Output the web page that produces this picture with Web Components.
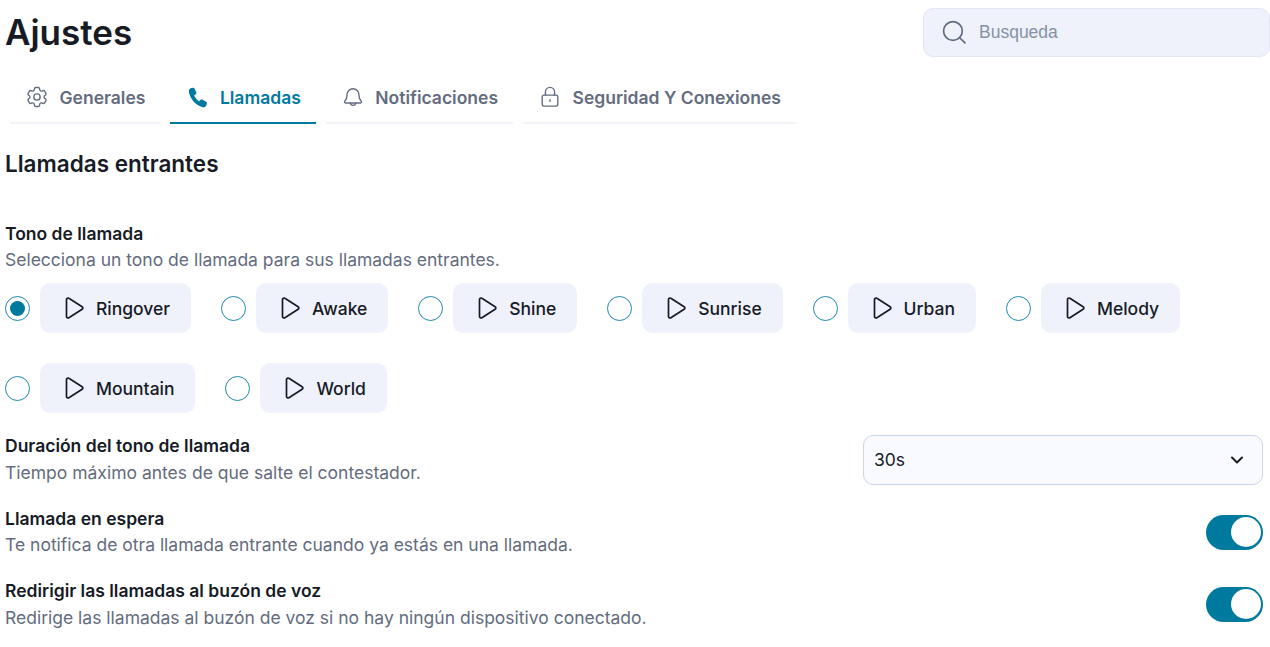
<!DOCTYPE html>
<html lang="es">
<head>
<meta charset="utf-8">
<title>Ajustes</title>
<style>
  html, body { margin: 0; background: #fff; }
  body { font-family: Inter, "Liberation Sans", sans-serif; color: #161b26; }
</style>
</head>
<body>
<settings-page></settings-page>

<script>
const ICONS = {
  gear: '<g transform="translate(12 12) scale(1.15) translate(-12 -12)" stroke-width="1.300"><circle cx="12" cy="12" r="3"/><path stroke-linejoin="round" d="M9.594 3.94c.09-.542.56-.94 1.11-.94h2.593c.55 0 1.02.398 1.11.94l.213 1.281c.063.374.313.686.645.87.074.04.147.083.22.127.325.196.72.257 1.075.124l1.217-.456a1.125 1.125 0 0 1 1.37.49l1.296 2.247a1.125 1.125 0 0 1-.26 1.431l-1.003.827c-.293.241-.438.613-.43.992a7.723 7.723 0 0 1 0 .255c-.008.378.137.75.43.991l1.004.827c.424.35.534.955.26 1.43l-1.298 2.247a1.125 1.125 0 0 1-1.369.491l-1.217-.456c-.355-.133-.75-.072-1.076.124a6.47 6.47 0 0 1-.22.128c-.331.183-.581.495-.644.869l-.213 1.281c-.09.543-.56.94-1.11.94h-2.594c-.55 0-1.019-.398-1.11-.94l-.213-1.281c-.062-.374-.312-.686-.644-.87a6.52 6.52 0 0 1-.22-.127c-.325-.196-.72-.257-1.076-.124l-1.217.456a1.125 1.125 0 0 1-1.369-.49l-1.297-2.247a1.125 1.125 0 0 1 .26-1.431l1.004-.827c.292-.24.437-.613.43-.991a6.932 6.932 0 0 1 0-.255c.007-.38-.138-.751-.43-.992l-1.004-.827a1.125 1.125 0 0 1-.26-1.43l1.297-2.247a1.125 1.125 0 0 1 1.37-.491l1.216.456c.356.133.751.072 1.076-.124.072-.044.146-.086.22-.128.332-.183.582-.495.644-.869l.214-1.28Z"/></g>',
  phone: '<path fill="currentColor" stroke="none" d="M4.500 2.600 7.300 1.900c.9-.2 1.700.2 2.100 1l1.800 3.800c.4.800.2 1.700-.5 2.200l-1.700 1.300c.9 2.800 2.600 4.800 5.300 6.300l1.600-1.400c.6-.5 1.500-.6 2.200-.2l3.900 2.300c.8.500 1.100 1.400.8 2.200l-.8 2c-.5 1.300-1.800 2.100-3.200 1.900C10.900 21.200 5 15.200 3.200 6.900c-.3-1.800.1-3.500 1.300-4.300z"/>',
  bell: '<path d="M5.500 9.500a6.500 6.500 0 0 1 13 0c0 3.800.9 5.600 2.500 7.200.6.600.2 1.800-.8 1.800H3.800c-1 0-1.400-1.200-.8-1.800 1.600-1.600 2.500-3.400 2.500-7.200z" stroke-linejoin="round"/><path d="M9 18.800a3.100 3.100 0 0 0 6 0"/>',
  lock: '<rect x="3.500" y="10" width="17" height="12" rx="2"/><path d="M7 10V6.500a5 5 0 0 1 10 0V10"/><path d="M12 15v1.800"/>',
  search: '<circle cx="10.500" cy="10.500" r="9"/><path d="M17.500 17.500 22 22"/>',
  play: '<path d="M3.500 3.600c0-1.300 1.400-2 2.400-1.300l13.200 8.400c1 .6 1 2 0 2.600L5.900 21.700c-1 .7-2.400 0-2.400-1.300z" stroke-linejoin="round"/>',
  chevron: '<path d="M7 9.500l5 5 5-5" stroke-linecap="round" stroke-linejoin="round"/>'
}

const svgIcon = (name, size, width) => `<svg width="${size}" height="${size}" viewBox="0 0 24 24" fill="none" stroke="currentColor" stroke-width="${width}" stroke-linecap="round" aria-hidden="true">${ICONS[name]}</svg>`

class SettingsTab extends HTMLElement {
  constructor () {
    super()
    const active = this.hasAttribute('active')
    this.attachShadow({ mode: 'open' }).innerHTML = `
      <style>
        :host {
          display: flex;
          align-items: center;
          gap: 11.500px;
          height: 50px;
          padding: 0 15px 2px 16px;
          box-sizing: border-box;
          font-size: 17.500px;
          font-weight: 600;
          color: ${active ? '#00799f' : '#636c7e'};
          border-bottom: 2px solid ${active ? '#00799f' : '#f1f3fa'};
        }
        svg { display: block; }
      </style>
      ${svgIcon(this.getAttribute('icon'), 22, 1.5)}
      <slot></slot>
    `
  }
}

class SearchBox extends HTMLElement {
  constructor () {
    super()
    this.attachShadow({ mode: 'open' }).innerHTML = `
      <style>
        :host {
          display: flex;
          align-items: center;
          gap: 12px;
          box-sizing: border-box;
          width: 347px;
          height: 49px;
          padding: 0 18px 0 18px;
          background: #eff2fb;
          border: 1px solid #e2e7f5;
          border-radius: 10px;
          color: #8492a6;
          font-family: "Liberation Sans", sans-serif;
          font-size: 17.500px;
        }
        svg { display: block; color: #5f6b7f; }
      </style>
      ${svgIcon('search', 25, 1.6)}
      <slot></slot>
    `
  }
}

class RingtoneOption extends HTMLElement {
  constructor () {
    super()
    const checked = this.hasAttribute('checked')
    this.attachShadow({ mode: 'open' }).innerHTML = `
      <style>
        :host { display: flex; align-items: center; gap: 10px; }
        .radio {
          box-sizing: border-box;
          width: 25px;
          height: 25px;
          border: 1.300px solid #2287a9;
          border-radius: 50%;
          display: flex;
          align-items: center;
          justify-content: center;
        }
        .dot { width: 15px; height: 15px; border-radius: 50%; background: #00799f; }
        .btn {
          display: flex;
          align-items: center;
          gap: 9px;
          box-sizing: border-box;
          height: 50px;
          padding: 0 20.900px 0 23px;
          background: #eff2fb;
          border-radius: 10px;
          font-size: 17.500px;
          font-weight: 500;
          color: #161b26;
        }
        svg { display: block; }
      </style>
      <div class="radio">${checked ? '<div class="dot"></div>' : ''}</div>
      <div class="btn">${svgIcon('play', 24, 1.7)}<slot></slot></div>
    `
  }
}

class SettingRow extends HTMLElement {
  constructor () {
    super()
    this.attachShadow({ mode: 'open' }).innerHTML = `
      <style>
        :host {
          display: flex;
          align-items: center;
          justify-content: space-between;
          padding-right: 7px;
        }
        .title { font-size: 17.500px; line-height: 25px; font-weight: 600; color: #161b26; }
        .desc {
          font-size: 17.500px;
          line-height: 28px;
          color: #636c7e;
          margin-top: var(--desc-shift, 0);
          margin-bottom: calc(0px - var(--desc-shift, 0px));
        }
      </style>
      <div>
        <div class="title"><slot name="title"></slot></div>
        <div class="desc"><slot name="desc"></slot></div>
      </div>
      <slot></slot>
    `
  }
}

class ToggleSwitch extends HTMLElement {
  constructor () {
    super()
    this.attachShadow({ mode: 'open' }).innerHTML = `
      <style>
        :host {
          display: flex;
          justify-content: flex-end;
          align-items: flex-start;
          box-sizing: border-box;
          width: 57px;
          height: 35px;
          padding: 2px;
          background: #00799f;
          border-radius: 18px;
        }
        .knob { width: 30px; height: 30px; border-radius: 50%; background: #fff; }
      </style>
      <div class="knob"></div>
    `
  }
}

class SelectBox extends HTMLElement {
  constructor () {
    super()
    this.attachShadow({ mode: 'open' }).innerHTML = `
      <style>
        :host {
          display: flex;
          align-items: center;
          justify-content: space-between;
          box-sizing: border-box;
          width: 400px;
          height: 50px;
          padding: 0 13px 0 10px;
          background: #f9faff;
          border: 1px solid #ccd6ef;
          border-radius: 10px;
          font-size: 17.500px;
          color: #161b26;
        }
        svg { display: block; }
      </style>
      <slot></slot>
      ${svgIcon('chevron', 24, 2)}
    `
  }
}

class SettingsPage extends HTMLElement {
  constructor () {
    super()
    const tones = ['Ringover', 'Awake', 'Shine', 'Sunrise', 'Urban', 'Melody', 'Mountain', 'World']
    this.attachShadow({ mode: 'open' }).innerHTML = `
      <style>
        :host { display: block; padding-left: 5px; }
        header {
          display: flex;
          justify-content: space-between;
          align-items: flex-start;
          padding-top: 8px;
          height: 74px;
          box-sizing: border-box;
        }
        h1 { margin: 3px 0 0; font-size: 35px; line-height: 42px; font-weight: 600; color: #161b26; }
        nav { display: flex; gap: 10px; padding-left: 5px; height: 50px; }
        h2 { margin: 26px 0 0; font-size: 22.500px; line-height: 28px; font-weight: 600; color: #161b26; }
        .tones {
          display: flex;
          flex-wrap: wrap;
          gap: 30px;
          margin-top: 9px;
          max-width: 1200px;
        }
        .tone-head { margin-top: 43px; padding-right: 0; }
        .duration { margin-top: 20px; --desc-shift: 1px; }
        .waiting { margin-top: 20px; }
        .voicemail { margin-top: 19px; --desc-shift: 1px; }
      </style>
      <header>
        <h1>Ajustes</h1>
        <search-box>Busqueda</search-box>
      </header>
      <nav>
        <settings-tab icon="gear">Generales</settings-tab>
        <settings-tab icon="phone" active>Llamadas</settings-tab>
        <settings-tab icon="bell">Notificaciones</settings-tab>
        <settings-tab icon="lock">Seguridad Y Conexiones</settings-tab>
      </nav>
      <h2>Llamadas entrantes</h2>
      <setting-row class="tone-head">
        <span slot="title">Tono de llamada</span>
        <span slot="desc">Selecciona un tono de llamada para sus llamadas entrantes.</span>
      </setting-row>
      <div class="tones">
        ${tones.map((t, i) => `<ringtone-option ${i === 0 ? 'checked' : ''}>${t}</ringtone-option>`).join('')}
      </div>
      <setting-row class="duration">
        <span slot="title">Duración del tono de llamada</span>
        <span slot="desc">Tiempo máximo antes de que salte el contestador.</span>
        <select-box>30s</select-box>
      </setting-row>
      <setting-row class="waiting">
        <span slot="title">Llamada en espera</span>
        <span slot="desc">Te notifica de otra llamada entrante cuando ya estás en una llamada.</span>
        <toggle-switch></toggle-switch>
      </setting-row>
      <setting-row class="voicemail">
        <span slot="title">Redirigir las llamadas al buzón de voz</span>
        <span slot="desc">Redirige las llamadas al buzón de voz si no hay ningún dispositivo conectado.</span>
        <toggle-switch></toggle-switch>
      </setting-row>
    `
  }
}

// children first so the page markup upgrades straight away
customElements.define('settings-tab', SettingsTab)
customElements.define('search-box', SearchBox)
customElements.define('ringtone-option', RingtoneOption)
customElements.define('setting-row', SettingRow)
customElements.define('toggle-switch', ToggleSwitch)
customElements.define('select-box', SelectBox)
customElements.define('settings-page', SettingsPage)
</script>
</body>
</html>
